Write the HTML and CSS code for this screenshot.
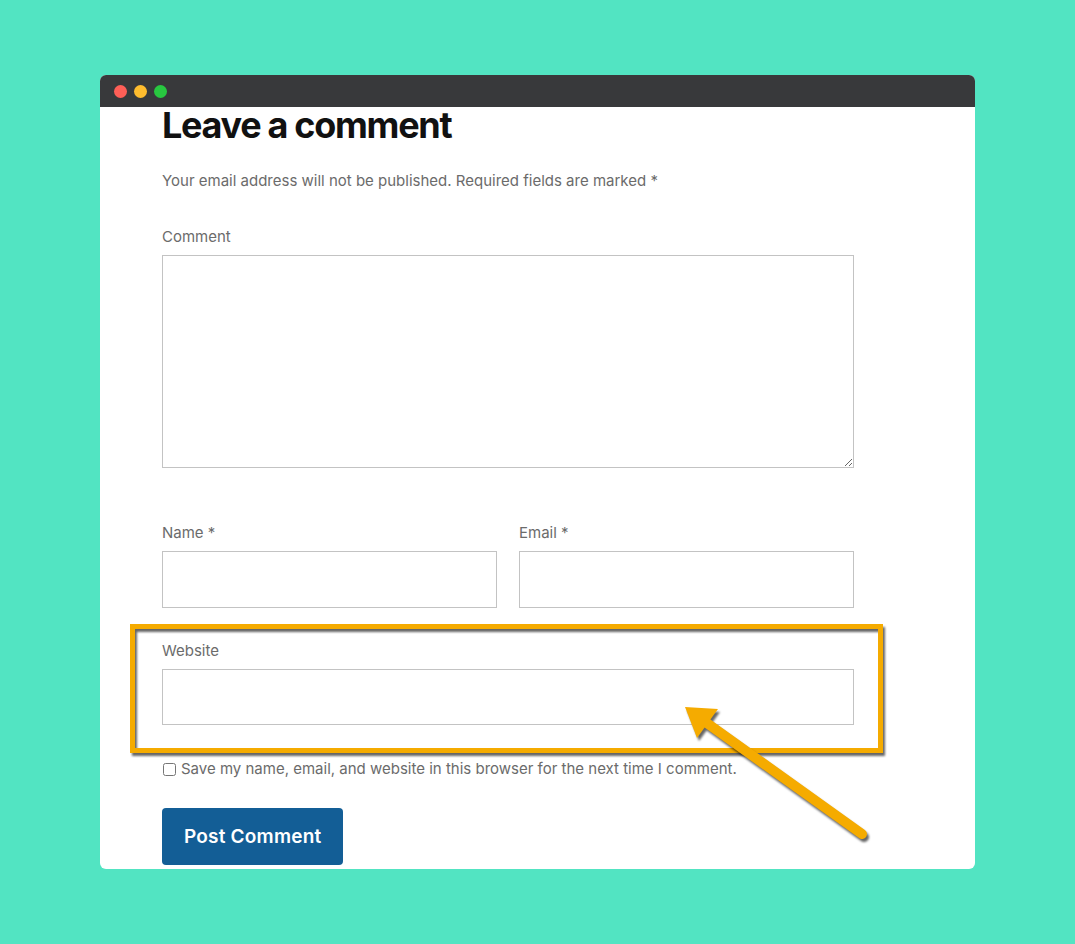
FILE: index.html
```html
<!DOCTYPE html>
<html lang="en">
<head>
    <meta charset="UTF-8">
    <title>Leave a comment</title>
    <link rel="stylesheet" href="styles.css">
</head>
<body>
    <div class="window">
        <div class="titlebar">
            <span class="dot red"></span>
            <span class="dot yellow"></span>
            <span class="dot green"></span>
        </div>

        <div class="content">
            <h1>Leave a comment</h1>
            <p class="notes">Your email address will not be published. Required fields are marked *</p>

            <form class="comment-form" onsubmit="return false">
                <div class="field field-comment">
                    <label for="comment">Comment</label>
                    <textarea id="comment"></textarea>
                </div>

                <div class="field-row">
                    <div class="field">
                        <label for="author">Name *</label>
                        <input type="text" id="author">
                    </div>
                    <div class="field">
                        <label for="email">Email *</label>
                        <input type="email" id="email">
                    </div>
                </div>

                <div class="field field-url">
                    <label for="url">Website</label>
                    <input type="url" id="url">
                </div>

                <div class="cookies">
                    <input type="checkbox" id="cookies">
                    <label for="cookies">Save my name, email, and website in this browser for the next time I comment.</label>
                </div>

                <button type="submit">Post Comment</button>
            </form>
        </div>
    </div>

    <!-- annotation drawn over the screenshot -->
    <div class="highlight"></div>
    <svg class="arrow" width="1075" height="944" viewBox="0 0 1075 944">
        <line x1="862" y1="834" x2="704" y2="721" stroke="#f5ab00" stroke-width="10" stroke-linecap="round"/>
        <polygon points="685,707 718,709 697,738" fill="#f5ab00"/>
    </svg>
</body>
</html>
```

FILE: styles.css
```css
html, body {
    margin: 0;
    padding: 0;
}
body {
    background: #52e4c2;
    font-family: Inter, "Liberation Sans", sans-serif;
    height: 944px;
    overflow: hidden;
}
.window {
    width: 875px;
    height: 794px;
    margin: 75px 0 0 100px;
    background: #fff;
    border-radius: 6px;
    overflow: hidden;
}
.titlebar {
    height: 32px;
    background: #38393b;
    display: flex;
    align-items: center;
    gap: 7px;
    padding-left: 14px;
}
.dot {
    width: 13px;
    height: 13px;
    border-radius: 50%;
}
.red { background: #fe5f57; }
.yellow { background: #febc2e; }
.green { background: #28c840; }

.content {
    width: 692px;
    padding-left: 62px;
}
h1 {
    font-weight: 700;
    font-size: 36px;
    line-height: 36px;
    letter-spacing: -1.3px;
    color: #111;
    margin: 0;
}
.notes {
    margin: 27px 0 0;
    font-size: 15px;
    line-height: 22px;
    color: #6b6b6b;
}
.comment-form {
    margin-top: 34px;
}
label {
    display: block;
    font-size: 15px;
    line-height: 22px;
    color: #6b6b6b;
    margin-bottom: 7px;
}
textarea, input[type="text"], input[type="email"], input[type="url"] {
    display: block;
    width: 100%;
    box-sizing: border-box;
    border: 1px solid #c3c3c3;
    border-radius: 0;
    margin: 0;
    padding: 8px;
    font: 15px Inter, sans-serif;
    background: #fff;
}
textarea {
    height: 213px;
}
input[type="text"], input[type="email"] {
    height: 57px;
}
input[type="url"] {
    height: 56px;
}
.field-row {
    display: flex;
    gap: 22px;
    margin-top: 54px;
}
.field-row .field {
    flex: 1;
}
.field-url {
    margin-top: 32px;
}
.cookies {
    display: flex;
    align-items: center;
    gap: 5px;
    margin-top: 33px;
}
.cookies input {
    margin: 0 0 0 1px;
    width: 13px;
    height: 13px;
}
.cookies label {
    margin: 0;
}
button {
    margin-top: 28px;
    height: 57px;
    padding: 0 22px;
    background: #135e96;
    color: #fff;
    border: none;
    border-radius: 4px;
    font-family: Inter, sans-serif;
    font-weight: 600;
    font-size: 19px;
    letter-spacing: 0.2px;
    cursor: pointer;
}

.highlight {
    position: absolute;
    left: 130px;
    top: 624px;
    width: 743px;
    height: 119px;
    border: 5px solid #f5ab00;
    filter: drop-shadow(2px 3px 1px rgba(0,0,0,0.6));
}
.arrow {
    position: absolute;
    left: 0;
    top: 0;
    filter: drop-shadow(2px 3px 1px rgba(0,0,0,0.6));
}
```
